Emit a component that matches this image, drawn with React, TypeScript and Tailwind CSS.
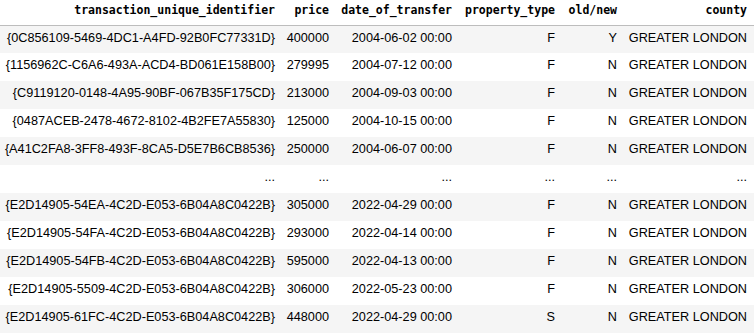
import React from 'react';

/*
    DataFrame preview table
*/
type Row = string[];

const columns: { name: string; width: string }[] = [
    { name: "transaction_unique_identifier", width: "w-[282px]" },
    { name: "price", width: "w-[54px]" },
    { name: "date_of_transfer", width: "w-[123px]" },
    { name: "property_type", width: "w-[103px]" },
    { name: "old/new", width: "w-[62px]" },
    { name: "county", width: "w-[130px]" },
];

const rows: Row[] = [
    ["{0C856109-5469-4DC1-A4FD-92B0FC77331D}", "400000", "2004-06-02 00:00", "F", "Y", "GREATER LONDON"],
    ["{1156962C-C6A6-493A-ACD4-BD061E158B00}", "279995", "2004-07-12 00:00", "F", "N", "GREATER LONDON"],
    ["{C9119120-0148-4A95-90BF-067B35F175CD}", "213000", "2004-09-03 00:00", "F", "N", "GREATER LONDON"],
    ["{0487ACEB-2478-4672-8102-4B2FE7A55830}", "125000", "2004-10-15 00:00", "F", "N", "GREATER LONDON"],
    ["{A41C2FA8-3FF8-493F-8CA5-D5E7B6CB8536}", "250000", "2004-06-07 00:00", "F", "N", "GREATER LONDON"],
    ["...", "...", "...", "...", "...", "..."],
    ["{E2D14905-54EA-4C2D-E053-6B04A8C0422B}", "305000", "2022-04-29 00:00", "F", "N", "GREATER LONDON"],
    ["{E2D14905-54FA-4C2D-E053-6B04A8C0422B}", "293000", "2022-04-14 00:00", "F", "N", "GREATER LONDON"],
    ["{E2D14905-54FB-4C2D-E053-6B04A8C0422B}", "595000", "2022-04-13 00:00", "F", "N", "GREATER LONDON"],
    ["{E2D14905-5509-4C2D-E053-6B04A8C0422B}", "306000", "2022-05-23 00:00", "F", "N", "GREATER LONDON"],
    ["{E2D14905-61FC-4C2D-E053-6B04A8C0422B}", "448000", "2022-04-29 00:00", "S", "N", "GREATER LONDON"],
];

export default function App() {
    return (
        <div className="w-[754px] h-[334px] overflow-hidden bg-white text-black">
            <table className="table-fixed border-collapse w-[754px]">
                <thead>
                    <tr className="h-[25px] border-b border-[#bdbdbd]">
                        {columns.map((col) => (
                            <th
                                key={col.name}
                                className={`${col.width} text-right align-top pt-[2px] pr-[7px] pl-0 font-bold text-[11.5px] leading-[16px] font-['DejaVu_Sans_Mono','Liberation_Mono',monospace] whitespace-nowrap`}
                            >
                                {col.name}
                            </th>
                        ))}
                    </tr>
                </thead>
                <tbody>
                    {rows.map((row, i) => (
                        <tr key={i} className={i % 2 === 0 ? "h-[28px] bg-[#f5f5f5]" : "h-[28px] bg-white"}>
                            {row.map((cell, j) => (
                                <td
                                    key={j}
                                    className="text-right align-top pt-[4px] pr-[7px] pl-0 text-[12.7px] leading-[16px] font-['Liberation_Sans',Arial,sans-serif] whitespace-nowrap"
                                >
                                    {cell}
                                </td>
                            ))}
                        </tr>
                    ))}
                </tbody>
            </table>
        </div>
    );
}
